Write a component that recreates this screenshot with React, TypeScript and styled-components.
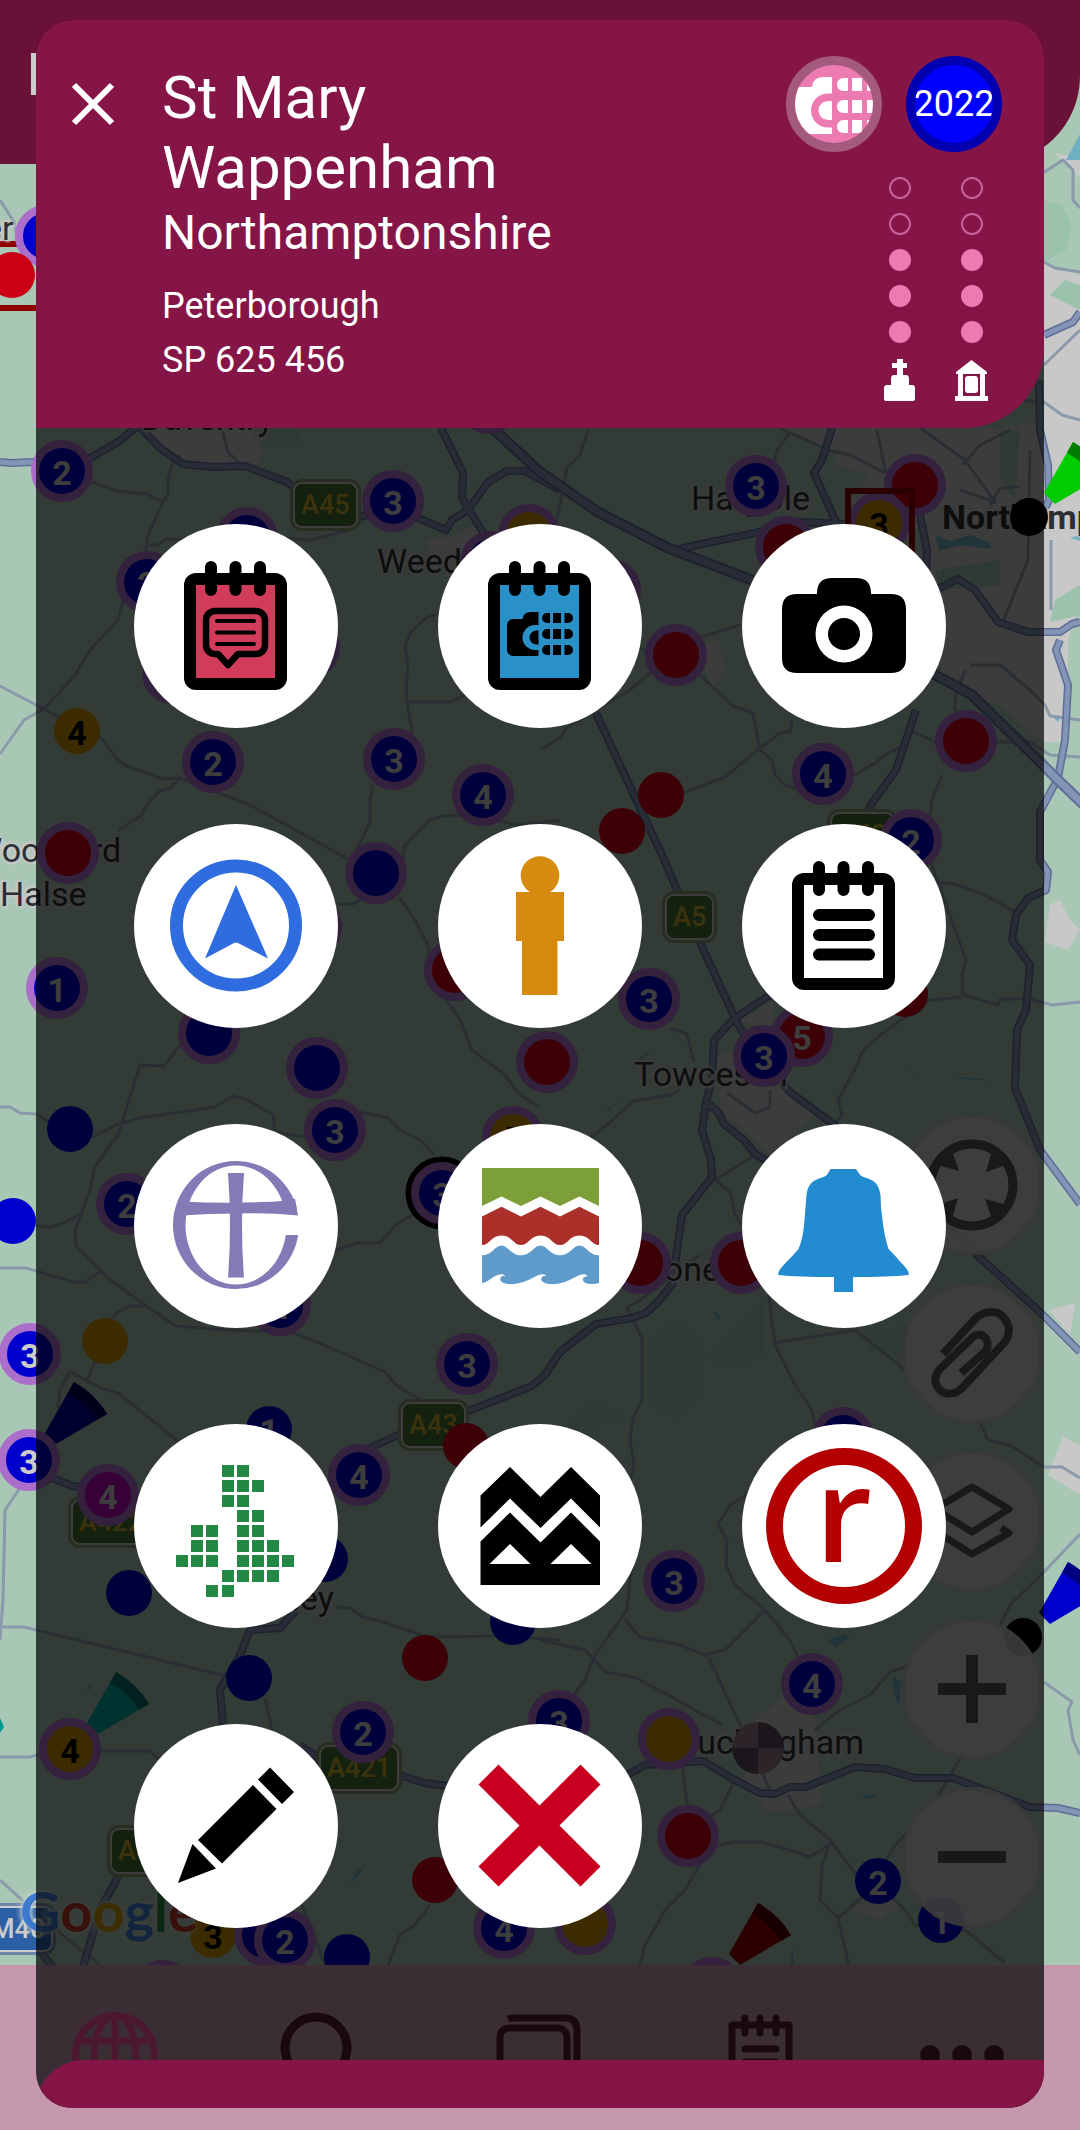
import React from "react";
import styled, { createGlobalStyle } from "styled-components";

const GlobalStyle = createGlobalStyle`
  * { box-sizing: border-box; }
  body { margin: 0; font-family: Roboto, "Noto Sans", sans-serif; background: #c598ad; }
  button { font: inherit; border: 0; padding: 0; background: none; cursor: pointer; color: inherit; }
  svg { display: block; }
`;

/* ---------- page behind the dialog ---------- */

const HEADER_HEIGHT = 164;

const Page = styled.div`
  position: relative;
  min-height: 100vh;
  display: flex;
  flex-direction: column;
  overflow: hidden;
  background: #a9c7b5;
`;

const AppBar = styled.header`
  position: relative;
  z-index: 1;
  height: ${HEADER_HEIGHT}px;
  padding: 40px 26px 0;
  background: #691136;
  border-bottom-right-radius: 88px;
  color: #cccccc;
  font-size: 60px;
  line-height: 70px;
`;

const MapArea = styled.main`
  position: relative;
  flex: 1;
`;

const MapClip = styled.div`
  position: absolute;
  inset: -${HEADER_HEIGHT}px 0 0;
  overflow: hidden;
`;

const MapSvg = styled.svg`
  position: absolute;
  left: 0;
  top: 0;
`;

const PlaceLabel = styled.span<{ $x: number; $y: number; $bold?: boolean }>`
  position: absolute;
  left: ${(p) => p.$x}px;
  top: ${(p) => p.$y - 32}px;
  font-size: 34px;
  line-height: 40px;
  font-weight: ${(p) => (p.$bold ? 700 : 400)};
  color: #2c2f31;
  white-space: nowrap;
  text-shadow: 0 0 4px #c8c8c8, 0 0 4px #c8c8c8, 2px 2px 2px #c8c8c8, -2px -2px 2px #c8c8c8;
`;

const RoadSign = styled.span<{ $x: number; $y: number; $motorway?: boolean }>`
  position: absolute;
  left: ${(p) => p.$x}px;
  top: ${(p) => p.$y}px;
  height: 48px;
  padding: 0 6px;
  border: 3px solid #cccccc;
  outline: 3px solid ${(p) => (p.$motorway ? "#6f86ac" : "#84966f")};
  outline-offset: -1px;
  border-radius: 10px;
  background: ${(p) => (p.$motorway ? "#2b5fa6" : "#41712f")};
  color: ${(p) => (p.$motorway ? "#cccccc" : "#c9a92c")};
  font-size: 27px;
  font-weight: 500;
  line-height: 42px;
`;

const pinFill = {
  blue: "#0000cc",
  red: "#cc0014",
  gold: "#cc8f00",
  magenta: "#b800b8",
};

type PinColor = keyof typeof pinFill;

const Pin = styled.span<{ $x: number; $y: number; $color: PinColor; $ring: boolean }>`
  position: absolute;
  left: ${(p) => p.$x - (p.$ring ? 31 : 23)}px;
  top: ${(p) => p.$y - (p.$ring ? 31 : 23)}px;
  width: ${(p) => (p.$ring ? 62 : 46)}px;
  height: ${(p) => (p.$ring ? 62 : 46)}px;
  border: ${(p) => (p.$ring ? "8px solid #ab6fcb" : "0")};
  border-radius: 50%;
  display: flex;
  align-items: center;
  justify-content: center;
  padding-top: 4px;
  background: ${(p) => pinFill[p.$color]};
  color: ${(p) => (p.$color === "gold" ? "#000000" : "#cccccc")};
  font-size: 34px;
  line-height: 40px;
  font-weight: 700;
`;

const BlackDot = styled.span<{ $x: number; $y: number; $size: number }>`
  position: absolute;
  left: ${(p) => p.$x - p.$size / 2}px;
  top: ${(p) => p.$y - p.$size / 2}px;
  width: ${(p) => p.$size}px;
  height: ${(p) => p.$size}px;
  border-radius: 50%;
  background: #000000;
`;

const CheckerDot = styled(BlackDot)`
  background: conic-gradient(#594a5a 25%, #957889 0 50%, #594a5a 0 75%, #957889 0);
`;

const RedFrame = styled.span<{ $x: number; $y: number }>`
  position: absolute;
  left: ${(p) => p.$x}px;
  top: ${(p) => p.$y}px;
  width: 70px;
  height: 70px;
  border: 6px solid #8f0000;
`;

const GoogleLogo = styled.span`
  position: absolute;
  left: 20px;
  top: 1881px;
  font-family: Lato, "Noto Sans", sans-serif;
  font-size: 56px;
  line-height: 60px;
  font-weight: 700;
  text-shadow: 0 0 6px #c8d4cc, 0 0 6px #c8d4cc;
`;

const LogoLetter = styled.span<{ $color: string }>`
  color: ${(p) => p.$color};
`;

const MapControls = styled.div`
  position: absolute;
  right: 38px;
  bottom: 38px;
  display: flex;
  flex-direction: column;
  gap: 28px;
`;

const MapControl = styled.button`
  width: 140px;
  height: 140px;
  border: 3px solid #b8bcba;
  border-radius: 50%;
  background: rgba(206, 206, 206, 0.88);
  color: #4e5852;
  display: grid;
  place-items: center;
`;

const BottomNav = styled.nav`
  height: 165px;
  padding-top: 40px;
  display: flex;
  background: #c598ad;
`;

const NavButton = styled.button<{ $active?: boolean }>`
  flex: 1;
  height: 100px;
  display: flex;
  justify-content: center;
  color: ${(p) => (p.$active ? "#ff50a0" : "#4d2135")};
`;

/* ---------- dialog ---------- */

const Dialog = styled.section`
  position: absolute;
  z-index: 2;
  inset: 20px 36px 22px;
  display: flex;
  flex-direction: column;
  border-radius: 36px;
  overflow: hidden;
  background: rgba(0, 0, 0, 0.7);
`;

const DialogHeader = styled.header`
  min-height: 408px;
  padding: 36px 42px 20px 24px;
  display: flex;
  align-items: flex-start;
  background: #841546;
  border-bottom-right-radius: 80px;
  color: #ffffff;
`;

const CloseButton = styled.button`
  width: 66px;
  height: 96px;
  margin-right: 36px;
  display: grid;
  place-items: center;
`;

const Heading = styled.div`
  flex: 1;
  padding-top: 7px;
`;

const Title = styled.h1`
  margin: 0;
  font-size: 60px;
  line-height: 70px;
  font-weight: 400;
`;

const County = styled.p`
  margin: 0 0 16px;
  font-size: 48px;
  line-height: 60px;
`;

const Detail = styled.p`
  margin: 0;
  font-size: 36px;
  line-height: 54px;
`;

const Status = styled.div`
  display: flex;
  flex-direction: column;
  align-items: flex-end;
  gap: 25px;
`;

const Badges = styled.div`
  display: flex;
  gap: 24px;
`;

const Badge = styled.span<{ $fill: string; $edge: string }>`
  width: 96px;
  height: 96px;
  border: 9px solid ${(p) => p.$edge};
  border-radius: 50%;
  overflow: hidden;
  display: flex;
  align-items: center;
  justify-content: center;
  background: ${(p) => p.$fill};
  font-size: 36px;
`;

const Ratings = styled.div`
  display: flex;
  gap: 36px;
  padding-right: 12px;
`;

const Rating = styled.div`
  width: 36px;
  display: flex;
  flex-direction: column;
  align-items: center;
  gap: 14px;
`;

const RatingDot = styled.span<{ $on: boolean }>`
  width: 22px;
  height: 22px;
  border-radius: 50%;
  border: ${(p) => (p.$on ? "0" : "2px solid #c4649a")};
  background: ${(p) => (p.$on ? "#eb7bb0" : "transparent")};
`;

const Actions = styled.div`
  flex: 1;
  padding-top: 96px;
  display: grid;
  grid-template-columns: repeat(3, 204px);
  grid-auto-rows: 204px;
  gap: 96px 100px;
  justify-content: center;
`;

const ActionButton = styled.button`
  width: 204px;
  height: 204px;
  border-radius: 50%;
  background: #ffffff;
`;

const DialogFooter = styled.footer`
  height: 48px;
  background: #841546;
  border-top-left-radius: 48px;
`;

/* ---------- map data ---------- */

type PinData = [x: number, y: number, color: PinColor, ring: boolean, label?: string];

const pins: PinData[] = [
  [46, 236, "blue", true],
  [12, 275, "red", false],
  [62, 471, "blue", true, "2"],
  [247, 538, "blue", true],
  [147, 582, "blue", true, "2"],
  [173, 673, "blue", true],
  [309, 648, "blue", true],
  [393, 501, "blue", true, "3"],
  [529, 535, "gold", true],
  [491, 562, "blue", true],
  [489, 403, "blue", true],
  [77, 731, "gold", false, "4"],
  [213, 762, "blue", true, "2"],
  [394, 759, "blue", true, "3"],
  [483, 795, "blue", true, "4"],
  [68, 853, "red", true],
  [756, 486, "blue", true, "3"],
  [915, 485, "red", true],
  [879, 523, "gold", true, "3"],
  [786, 547, "red", true],
  [610, 590, "blue", true],
  [676, 655, "red", true],
  [823, 774, "blue", true, "4"],
  [966, 741, "red", true],
  [661, 795, "red", false],
  [622, 831, "red", false],
  [911, 840, "blue", true, "2"],
  [57, 988, "blue", true, "1"],
  [376, 873, "blue", true],
  [311, 927, "blue", true],
  [209, 1033, "blue", true],
  [317, 1068, "blue", true],
  [335, 1130, "blue", true, "3"],
  [70, 1129, "blue", false],
  [127, 1204, "blue", true, "2"],
  [13, 1221, "blue", false],
  [455, 970, "red", true],
  [513, 1137, "gold", true, "5"],
  [442, 1193, "blue", true, "3"],
  [547, 1062, "red", true],
  [649, 999, "blue", true, "3"],
  [802, 1036, "red", true, "5"],
  [764, 1056, "blue", true, "3"],
  [905, 994, "red", false],
  [640, 1263, "red", true],
  [741, 1263, "red", true],
  [280, 1305, "blue", true, "4"],
  [105, 1341, "gold", false],
  [30, 1354, "blue", true, "3"],
  [29, 1460, "blue", true, "3"],
  [108, 1495, "magenta", true, "4"],
  [269, 1429, "blue", false, "1"],
  [359, 1475, "blue", true, "4"],
  [467, 1364, "blue", true, "3"],
  [466, 1446, "red", false],
  [325, 1559, "blue", false],
  [129, 1593, "blue", false],
  [513, 1622, "blue", false],
  [425, 1658, "red", false],
  [249, 1678, "blue", false],
  [843, 1438, "blue", true],
  [674, 1581, "blue", true, "3"],
  [812, 1684, "blue", true, "4"],
  [70, 1749, "gold", true, "4"],
  [363, 1732, "blue", true, "2"],
  [435, 1880, "red", false],
  [213, 1935, "gold", false, "3"],
  [265, 1935, "blue", true],
  [285, 1940, "blue", true, "2"],
  [347, 1957, "blue", false],
  [163, 1991, "blue", true],
  [504, 1928, "blue", true, "4"],
  [559, 1721, "blue", true, "3"],
  [669, 1739, "gold", true],
  [688, 1836, "red", true],
  [585, 1924, "gold", true],
  [878, 1881, "blue", false, "2"],
  [941, 1920, "blue", false, "1"],
  [712, 1988, "blue", true],
];

const places: { name: string; x: number; y: number; bold?: boolean }[] = [
  { name: "er", x: -16, y: 240 },
  { name: "Daventry", x: 141, y: 430 },
  { name: "Harpole", x: 691, y: 510 },
  { name: "Weedon", x: 377, y: 573 },
  { name: "Northampton", x: 942, y: 529, bold: true },
  { name: "Woodford", x: -28, y: 862 },
  { name: "Halse", x: 0, y: 906 },
  { name: "Towcester", x: 634, y: 1086 },
  { name: "Silverstone", x: 553, y: 1281 },
  { name: "Brackley", x: 206, y: 1610 },
  { name: "Buckingham", x: 676, y: 1754 },
];

const signs: { name: string; x: number; y: number; motorway?: boolean }[] = [
  { name: "A45", x: 292, y: 481 },
  { name: "A43", x: 829, y: 811 },
  { name: "A5", x: 664, y: 893 },
  { name: "A43", x: 400, y: 1401 },
  { name: "A422", x: 70, y: 1498 },
  { name: "A421", x: 318, y: 1744 },
  { name: "A43", x: 109, y: 1827 },
  { name: "M40", x: -18, y: 1905, motorway: true },
];

const mainRoads = [
  "0,462 12,463 33,462 62,471 90,458 118,442 140,424",
  "141,428 160,448 183,464 214,467 245,466 287,482 305,496",
  "360,517 393,505 418,518 446,530 452,520 468,510 488,482 507,471 525,471 560,490",
  "441,428 463,473 462,498 484,534",
  "676,550 697,545 755,533 800,522 850,524",
  "832,428 822,460 814,473 836,522",
  "920,515 927,550 925,600",
  "1039,380 1040,430 1048,465 1049,500 1040,520",
  "1044,335 1073,322 1080,312",
  "925,595 958,579 975,590 998,622 1028,632 1060,632 1072,624 1080,622",
  "1060,640 1056,650 1068,685 1065,740 1058,778 1040,812 1040,860 1048,872 1046,890 1028,898 1016,915 1012,940 1030,965 1026,1010 1017,1030 1015,1088 1040,1150 1080,1204",
  "596,713 613,750 640,808 662,855 690,920 708,960 735,1018 744,1035 790,1092 833,1124 870,1160",
  "916,710 896,770 870,806 866,835",
  "800,980 767,997 735,1018 714,1040 712,1080 706,1102 702,1130 711,1160 712,1177 682,1215 677,1250 673,1283 658,1302 646,1313 632,1318 596,1324 560,1352 545,1375 532,1386 468,1411 400,1434 370,1448",
  "706,1102 718,1112 724,1124 744,1140 755,1154 800,1180",
  "940,1220 978,1256 1040,1312 1080,1352",
  "45,1475 72,1486 100,1490",
  "296,1610 280,1628 250,1630 240,1655 220,1690 223,1725",
  "300,1745 318,1758",
  "400,1775 424,1783 448,1786 500,1790 600,1790 645,1765 703,1761 735,1780 760,1793 775,1794 790,1787 806,1787 855,1767 885,1769 915,1778 953,1778 1030,1807 1058,1808 1080,1813",
  "120,1873 100,1910 82,1970",
  "20,1925 55,1970",
];

const minorRoads = [
  "92,482 117,491 147,494 163,502 168,495 168,477 173,462 180,456",
  "163,502 148,535 145,555 130,575 118,620 90,650 75,675 44,709 24,720 0,754",
  "145,545 158,545 166,539 200,540 245,536 310,540 350,530",
  "222,430 228,452 238,462",
  "0,686 44,709 70,723 97,733 107,745 116,758 124,765 163,779 180,778 250,805 350,860",
  "180,778 170,788 160,791 148,803 141,816 118,830",
  "440,614 427,617 411,632 405,646 408,665 406,688 408,710 412,730 411,745",
  "408,702 450,702 475,690",
  "373,785 370,800 370,822 352,860 376,873",
  "400,875 405,845 430,820 443,816 470,815 520,825 560,820",
  "337,904 353,904 370,895",
  "399,897 415,920 428,945 432,985 450,1005 460,1020 472,1050 505,1075 520,1095 540,1107",
  "0,1107 10,1107 20,1113 36,1114 60,1129 93,1137 115,1125 140,1118 215,1107 233,1096 248,1100 273,1115 275,1132 310,1138 360,1112 388,1118 400,1130 420,1140 435,1155",
  "180,1045 164,1066 140,1065 118,1135 95,1166 90,1190 75,1230 76,1246 110,1280 145,1305 176,1326 225,1330 290,1332 322,1344 385,1372 396,1385 420,1400",
  "36,1226 50,1227 64,1223 82,1213",
  "0,1268 26,1268 74,1282 85,1282 100,1272",
  "105,1341 87,1380",
  "143,1306 130,1306 116,1313 105,1335",
  "58,1408 60,1390 70,1372 103,1389 118,1393 180,1443",
  "22,1485 5,1510 3,1600 0,1640",
  "0,1627 24,1627 230,1677",
  "337,1607 350,1608 362,1617 380,1621 428,1637 500,1636 560,1640",
  "0,1757 30,1757 50,1751 150,1751 160,1760",
  "330,1252 357,1243 380,1243 395,1225 420,1210",
  "540,645 600,630 650,653 740,625",
  "700,675 733,706 753,713 760,750 772,760 775,775 785,785 800,790",
  "760,748 780,733 790,732 792,720",
  "683,793 725,777 760,748",
  "540,750 560,738 566,728 630,690 690,640",
  "588,430 580,455 567,468 555,530",
  "780,428 828,450 850,455 885,473",
  "790,432 777,450 772,470",
  "877,430 885,470 915,500",
  "920,428 965,460 995,502 960,490",
  "1010,430 980,445 963,465",
  "990,505 1000,488 1020,487",
  "1030,450 1028,560 1002,624",
  "1051,540 1051,610",
  "966,670 956,690 954,720",
  "970,665 1000,665 1030,690 1045,705 1050,716 1080,720",
  "910,730 935,742 1030,742 1050,755 1080,757",
  "942,775 932,800 930,815 917,830",
  "855,775 875,763 890,752 900,748",
  "930,860 966,960 962,975 963,995 998,1005 1000,999 1030,999 1052,1005 1080,1002",
  "963,997 930,1000 880,1035 862,1052 857,1065 838,1100 842,1115 834,1125",
  "940,883 955,884 985,895 1015,912",
  "670,1028 687,1034 694,1062",
  "590,1138 607,1125 633,1101 670,1095 680,1090",
  "727,1093 755,1113 770,1107 770,1090",
  "755,1155 715,1180 730,1192 735,1215 760,1250 768,1290 775,1345 795,1385 812,1410 815,1425",
  "775,1343 855,1330 905,1370 980,1422 988,1440 1010,1445 1044,1467 1062,1467 1080,1478",
  "700,1255 640,1300 627,1308 642,1338 642,1400 633,1418 630,1440 634,1465 620,1520 632,1560 627,1610 595,1655",
  "755,1490 730,1505 718,1525 727,1540 726,1565 735,1585 765,1610 790,1640 800,1662 830,1665",
  "765,1610 725,1650 705,1655 680,1645 640,1637 625,1620",
  "540,1640 585,1650 605,1672 637,1678 722,1725",
  "709,1658 740,1725 770,1790",
  "595,1655 585,1680 570,1700",
  "682,1765 688,1810",
  "735,1780 720,1810 705,1820 690,1836",
  "715,1846 735,1842 760,1842 790,1850 810,1857 830,1844 822,1865 820,1900 838,1918 870,1890",
  "838,1918 850,1970",
  "788,1795 800,1815 830,1840 860,1880",
  "700,1865 685,1890 665,1910 645,1945 639,1970",
  "890,1895 905,1910 915,1925 965,1930 1005,1963",
  "880,1870 895,1845 930,1810 965,1750 970,1720",
  "815,1730 840,1710 870,1695 890,1672 925,1660 980,1632",
  "1080,1534 1044,1572 1010,1605 995,1635",
  "1044,1682 1072,1702 1068,1710 1073,1740 1080,1755",
  "430,1905 415,1925 400,1935 388,1965",
  "0,1880 22,1900 50,1925 100,1965",
  "302,1905 325,1965",
  "265,1698 272,1730",
  "1040,175 1063,160 1073,170 1073,200 1080,208",
  "1044,262 1055,268 1080,272",
  "1044,365 1080,330",
  "1080,420 1062,415 1044,402 1020,400",
  "0,200 14,222 18,240",
];

const urbanAreas = [
  "141,428 250,428 264,452 257,464 214,467 183,462",
  "425,540 460,535 480,520 490,560 450,580",
  "780,426 836,452 834,465 870,475 850,500 852,524 925,530 930,600 945,690 1000,705 1044,742 1068,742 1068,640 1080,600 1080,380 1044,420 1000,428",
  "1054,153 1080,158 1080,178 1072,170",
  "1044,262 1080,275 1080,440 1044,430",
  "700,645 718,640 725,670 710,690",
  "718,1055 745,1050 790,1090 815,1115 770,1155 745,1130 720,1110",
  "740,1020 775,1000 770,1030",
  "745,1730 790,1690 815,1720 822,1805 768,1812 745,1780",
  "1050,905 1060,900 1070,920 1080,930 1068,950 1045,942",
  "1049,1310 1075,1303 1070,1335",
  "1048,1475 1063,1437 1080,1445 1080,1495",
  "850,1910 880,1895 900,1905 880,1920",
];

const woodland = [
  "250,420 300,420 300,445 275,448",
  "650,1340 680,1318 705,1345 702,1390 680,1420 665,1415 645,1395",
  "707,1360 730,1330 765,1300 765,1355 745,1367",
  "565,1430 595,1400 630,1420",
  "1000,430 1020,430 1015,500 1000,480",
  "1044,200 1062,205 1072,225 1066,250 1044,262",
  "1050,295 1065,280 1080,285 1080,310",
  "1055,600 1080,585 1080,615 1050,622",
  "935,570 1000,560 1000,585 940,590",
  "870,1330 910,1325 905,1355 870,1350",
];

const motorway = "489,425 540,472 598,512 668,548 752,580 850,620 930,672 972,695 1034,756 1058,780 1085,806";

const wedges = [
  { x: 45, y: 1433, color: "#00009c", shade: "#00005c" },
  { x: 87, y: 1723, color: "#00a79e", shade: "#006e68" },
  { x: 729, y: 1954, color: "#960000", shade: "#550000" },
  { x: 1039, y: 1613, color: "#0000cc", shade: "#000080" },
  { x: 1044, y: 493, color: "#00cc00", shade: "#007d00" },
];

function MapDrawing() {
  return (
    <MapSvg width="1080" height="1970" viewBox="0 0 1080 1970" aria-hidden="true">
      {urbanAreas.map((p) => <polygon key={p} points={p} fill="#c8c8c8" />)}
      {woodland.map((p) => <polygon key={p} points={p} fill="#9bc2ac" />)}
      <g fill="#6fb0c4">
        <path d="M935 535l15 6 20-6 20 8 1 6-30-4-22 6z" />
        <path d="M955 550l-12 20-4 18 8-24z" />
        <path d="M638 1058l16-9-14 12zM606 1110l14-10-12 12zM912 1073l-4-6 10 10zM955 1079l45 2-40-4z" />
        <path d="M828 1640l16-6 6 2-14 12zM893 1676l8 6-2 24-6-16zM860 1795h18l-8 4z" />
        <path d="M712 1310l9 6-2 6zM350 1885l5-12 15-12zM86 1690l5-8-1 8zM791 1965l1-20 2 20z" />
        <path d="M1066 160l14-26v26zM1070 538l10-3v6zM1050 714l10 4-2 4z" />
      </g>
      <g fill="none" stroke="#8b9aab" strokeWidth="3" strokeLinejoin="round">
        {minorRoads.map((p) => <polyline key={p} points={p} />)}
      </g>
      <g fill="none" stroke="#5d6e96" strokeWidth="8" strokeLinejoin="round">
        {mainRoads.map((p) => <polyline key={p} points={p} />)}
      </g>
      <g fill="none" stroke="#8394b6" strokeWidth="5" strokeLinejoin="round">
        {mainRoads.map((p) => <polyline key={p} points={p} />)}
      </g>
      <polyline points={motorway} fill="none" stroke="#5d6e96" strokeWidth="11" />
      <polyline points={motorway} fill="none" stroke="#8394b6" strokeWidth="7" />
      {wedges.map(({ x, y, color, shade }) => (
        <g key={color} transform={`translate(${x} ${y})`}>
          <path d="M0 0L11 11 62 -19Q50 -39 29 -51Z" fill={color} />
          <path d="M29 -51Q50 -39 62 -19L52 -13Q42 -30 23 -40Z" fill={shade} />
        </g>
      ))}
      <path d="M0 1718l4 9-4 6z" fill="#009a90" />
      <circle cx="442" cy="1193" r="33" fill="none" stroke="#000" strokeWidth="7" />
    </MapSvg>
  );
}

/* ---------- icons ---------- */

function ActionIcon({ children }: { children: React.ReactNode }) {
  return (
    <svg width="204" height="204" viewBox="0 0 204 204" aria-hidden="true">
      {children}
    </svg>
  );
}

function Notepad({ fill, children }: { fill: string; children?: React.ReactNode }) {
  return (
    <ActionIcon>
      <rect x="50" y="49" width="103" height="117" rx="12" />
      <rect x="62" y="61" width="79" height="93" fill={fill} />
      <path d="M77 43v23M101.500 43v23M126 43v23" stroke="#000" strokeWidth="12" strokeLinecap="round" />
      {children}
    </ActionIcon>
  );
}

const gridRows = [[3, 4], [3, 4, 5], [3, 4], [4, 5], [1, 2, 4, 5], [1, 2, 4, 5, 6], [0, 1, 2, 4, 5, 6, 7], [3, 4, 5, 6], [2, 3]];

const actions: { label: string; icon: React.ReactNode }[] = [
  {
    label: "Comments",
    icon: (
      <Notepad fill="#d03c5a">
        <path
          d="M81 87h41a9 9 0 0 1 9 9v25a9 9 0 0 1-9 9h-18l-10 11-10-11h-3a9 9 0 0 1-9-9v-25a9 9 0 0 1 9-9z"
          fill="none"
          stroke="#000"
          strokeWidth="6.5"
          strokeLinejoin="round"
        />
        <path d="M83 97h37M83 108.500h37M83 120h37" stroke="#000" strokeWidth="4" strokeLinecap="round" />
      </Notepad>
    ),
  },
  {
    label: "Visit log",
    icon: (
      <Notepad fill="#2a91c8">
        <path d="M100.500 88v44H75a6 6 0 0 1-6-6v-25a6 6 0 0 1 6-6h9.500q1-7 8-7z" />
        <path d="M101 101h-4a12.500 12.500 0 0 0 0 25h4z" fill="#2a91c8" />
        <path d="M100.500 106.500h-2a7 7 0 0 0 0 14h2z" />
        {[89, 105, 121].map((y) => (
          <g key={y} transform={`translate(104 ${y})`}>
            <path d="M8 0v10H5a5 5 0 0 1 0-10zM11 0h8v10h-8zM22.500 0H26a5 5 0 0 1 0 10h-3.500z" />
          </g>
        ))}
      </Notepad>
    ),
  },
  {
    label: "Photos",
    icon: (
      <ActionIcon>
        <path d="M75 70V69q0-15 15-15h24q15 0 15 15v1h20q15 0 15 15v49q0 15-15 15H55q-15 0-15-15V85q0-15 15-15z" />
        <circle cx="102" cy="110" r="28.500" fill="#fff" />
        <circle cx="102" cy="110" r="16" />
      </ActionIcon>
    ),
  },
  {
    label: "Navigate",
    icon: (
      <ActionIcon>
        <circle cx="102" cy="101.500" r="59.500" fill="none" stroke="#2f6cdf" strokeWidth="13" />
        <path d="M102 61l32 73.500-30-15.500q-2-1-4 0l-29 15.500z" fill="#2f6cdf" />
      </ActionIcon>
    ),
  },
  {
    label: "Street view",
    icon: (
      <ActionIcon>
        <circle cx="102" cy="51.500" r="19.300" fill="#d68b0e" />
        <path d="M78 68h48v49h-6.500v54H84v-54h-6z" fill="#d68b0e" />
      </ActionIcon>
    ),
  },
  {
    label: "Notes",
    icon: (
      <Notepad fill="#fff">
        <path d="M77 91h50M77 111h50M77 130.500h50" stroke="#000" strokeWidth="12" strokeLinecap="round" />
      </Notepad>
    ),
  },
  {
    label: "A Church Near You",
    icon: (
      <ActionIcon>
        <g fill="#8579b6">
          <path
            fillRule="evenodd"
            d="M39 101a63 64 0 0 1 126 0a63 64 0 0 1-126 0zM51.500 101a50.500 59.500 0 0 1 101 0a50.500 59.500 0 0 1-101 0z"
          />
          <rect x="138" y="84" width="30" height="27" fill="#fff" />
          <path d="M48 77.500q54 3 107 -1l6 -2 3 17q-31-3-62-2-27 0-54 2z" />
          <path d="M94 49h16q-4 52 0 104.500H94q4-52 0-104.500z" />
        </g>
      </ActionIcon>
    ),
  },
  {
    label: "Geology",
    icon: (
      <ActionIcon>
        <path d="M44 44h117v38l-19.500-9.500L122 82l-19.500-9.500L83 82l-19.500-9.500L44 82z" fill="#7c9f3a" />
        <path
          d="M44 92.500l19.500-9.800L83 92.500l19.500-9.800L122 92.500l19.500-9.800L161 92.500V121c-8 0-9-9.600-19.500-9.600S130 121 122 121s-9-9.600-19.500-9.600S91 121 83 121s-9-9.600-19.500-9.600S52 121 44 121z"
          fill="#aa3029"
        />
        <path
          d="M44 131.300c10 0 13-9.800 19.500-9.800s9.500 9.800 19.500 9.800 13-9.800 19.500-9.800 9.500 9.800 19.500 9.800 13-9.800 19.500-9.800 9.500 9.800 19.500 9.800V159c-6 1.500-15 2-16-3-.5-3 2-4 4.500-3.500-2-4-8-1.500-12 .5-8 4-15 8-27 7-8-1-9-6-5-8 1-.5 2 0 3 .5-2-4-8-1.500-12 .5-8 4-16 8-27 7-8-1-9-6-5-8 1-.5 2 0 3 .5-2-4-8-1.500-12 .5-4 2.500-6 5-11.500 6z"
          fill="#5e9bcb"
        />
      </ActionIcon>
    ),
  },
  {
    label: "Bells",
    icon: (
      <ActionIcon>
        <path
          d="M88.500 45H114l3.500 5q1 2 4 3c8 3 15 4 17 18q0 12 2 25 2 17 6 29 8 8 12 13 10 10 8 13-20 2-55.500 2v15H92v-15q-36 0-55.500-2-2-3 8-13 5-5 12-13 5-12 6-29 1-13 2-25c2-14 9-15 17-18q3-1 4-3z"
          fill="#238bcf"
        />
      </ActionIcon>
    ),
  },
  {
    label: "Geograph",
    icon: (
      <ActionIcon>
        <g fill="#238843">
          {gridRows.map((cols, r) =>
            cols.map((c) => <rect key={`${r}-${c}`} x={42 + Math.round(c * 15.2)} y={41 + r * 15} width="12" height="12" />),
          )}
        </g>
      </ActionIcon>
    ),
  },
  {
    label: "Landscape",
    icon: (
      <ActionIcon>
        <path d="M42.500 71.500L72 43l30.500 30L133 43l29 28.500v32L133 74.500 102.500 104 72 74.500l-29.500 29z" />
        <path
          fillRule="evenodd"
          d="M42.500 117.500L72 88.500l30.500 30L133 88.500l29 29V161H42.500zM51.500 140h41L72 120zM112.500 140h41L133 120z"
        />
      </ActionIcon>
    ),
  },
  {
    label: "National register",
    icon: (
      <ActionIcon>
        <circle cx="102" cy="102" r="69.500" fill="none" stroke="#b30000" strokeWidth="17" />
        <text x="73" y="138" fontFamily="'Open Sans', 'Noto Sans', sans-serif" fontSize="132" fontWeight="600" fill="#b30000">
          r
        </text>
      </ActionIcon>
    ),
  },
  {
    label: "Edit",
    icon: (
      <ActionIcon>
        <path d="M44 159l14.500-39L82 144.500zM64 116l55-55 23.500 24L88 139.500zM124 55.500l12-12L160 68l-12 12z" />
      </ActionIcon>
    ),
  },
  {
    label: "Remove",
    icon: (
      <ActionIcon>
        <path
          d="M40.500 60.500l20-20 41 41 41-41 20 20-41 41 41 41-20 20-41-41-41 41-20-20 41-41z"
          fill="#c8001f"
        />
      </ActionIcon>
    ),
  },
];

const mapTools: { label: string; icon: React.ReactNode }[] = [
  {
    label: "Locate",
    icon: (
      <>
        <circle r="41" fill="none" stroke="currentColor" strokeWidth="9" />
        {[0, 90, 180, 270].map((a) => (
          <path key={a} d="M-13 -14L-19 -31-26 -36-36 -26-31 -19z" fill="currentColor" transform={`rotate(${a})`} />
        ))}
      </>
    ),
  },
  {
    label: "Attachments",
    icon: (
      <path
        d="M-29 1L3 -34C12 -43 26 -43 32 -35 40 -26 37 -15 31 -9L-9 34C-17 43 -28 42 -33 36-38 30 -38 22 -32 16L1 -16C9 -23 20 -13 14 -2L-11 20"
        fill="none"
        stroke="currentColor"
        strokeWidth="8"
      />
    ),
  },
  {
    label: "Layers",
    icon: (
      <path
        d="M0 -34L37 -12 0 11-37 -12zM-37 10L0 33 37 12 29 7"
        fill="none"
        stroke="currentColor"
        strokeWidth="7"
        strokeLinejoin="round"
      />
    ),
  },
  { label: "Zoom in", icon: <path d="M-34 -6h28v-28h12v28h28v12h-28v28h-12v-28h-28z" fill="currentColor" /> },
  { label: "Zoom out", icon: <path d="M-34 -6h68v12h-68z" fill="currentColor" /> },
];

const navItems: { label: string; icon: React.ReactNode }[] = [
  {
    label: "Map",
    icon: (
      <g fill="none" stroke="currentColor" strokeWidth="7">
        <circle cx="57" cy="50" r="39.500" />
        <ellipse cx="57" cy="50" rx="21" ry="39.500" />
        <path d="M57 10v80M20 36h74M20 64h74" />
      </g>
    ),
  },
  {
    label: "Search",
    icon: (
      <g fill="none" stroke="currentColor" strokeWidth="9">
        <circle cx="42" cy="43" r="31" />
        <path d="M64 65l26 26" />
      </g>
    ),
  },
  {
    label: "Lists",
    icon: (
      <g fill="none" stroke="currentColor" strokeWidth="7">
        <path d="M18 14q2-1 6-1h51q12 0 12 12v47" />
        <rect x="10" y="23" width="67" height="62" rx="9" />
      </g>
    ),
  },
  {
    label: "Notes",
    icon: (
      <g fill="none" stroke="currentColor" strokeWidth="7" strokeLinejoin="round">
        <rect x="26" y="20" width="57" height="70" />
        <path d="M39 13v15M54 13v15M70 13v15M39 44h31M39 57h31M39 70h31" strokeLinecap="round" />
      </g>
    ),
  },
  {
    label: "More",
    icon: (
      <g fill="currentColor">
        <circle cx="8" cy="50" r="10" />
        <circle cx="40" cy="50" r="10" />
        <circle cx="72" cy="50" r="10" />
      </g>
    ),
  },
];

const ratings = [
  {
    label: "Church rating 3 of 5",
    icon: (
      <path d="M15 2h6v4h4v5h-4v7h3q3 0 3 4v6h3q3 0 3 3v11q0 2-2 2H4q-2 0-2-2V31q0-3 3-3h4v-6q0-4 3-4h3v-7h-5V6h5z" />
    ),
  },
  {
    label: "Furnishings rating 3 of 5",
    icon: (
      <path
        fillRule="evenodd"
        d="M17.500 3l15.500 12v2h-2v22h3v5H1v-5h3V17H2v-2zM9 17v22h17V17zM14 19h7q3 0 3 3v11q0 3-3 3h-7q-3 0-3-3V22q0-3 3-3z"
      />
    ),
  },
];

export default function App() {
  return (
    <>
      <GlobalStyle />
      <Page>
        <AppBar>Map</AppBar>
        <MapArea>
          <MapClip>
            <MapDrawing />
            <RedFrame $x={-28} $y={241} />
            {places.map((p) => (
              <PlaceLabel key={p.name} $x={p.x} $y={p.y} $bold={p.bold}>
                {p.name}
              </PlaceLabel>
            ))}
            {signs.map((s) => (
              <RoadSign key={`${s.x}-${s.y}`} $x={s.x} $y={s.y} $motorway={s.motorway}>
                {s.name}
              </RoadSign>
            ))}
            {pins.map(([x, y, color, ring, label]) => (
              <Pin key={`${x}-${y}`} $x={x} $y={y} $color={color} $ring={ring}>
                {label}
              </Pin>
            ))}
            <RedFrame $x={845} $y={488} />
            <BlackDot $x={1029} $y={517} $size={38} />
            <BlackDot $x={1023} $y={1637} $size={38} />
            <CheckerDot $x={758} $y={1748} $size={52} />
            <GoogleLogo>
              <LogoLetter $color="#3f78cf">G</LogoLetter>
              <LogoLetter $color="#c0392b">o</LogoLetter>
              <LogoLetter $color="#c9960a">o</LogoLetter>
              <LogoLetter $color="#3f78cf">g</LogoLetter>
              <LogoLetter $color="#2a8743">l</LogoLetter>
              <LogoLetter $color="#c0392b">e</LogoLetter>
            </GoogleLogo>
          </MapClip>
          <MapControls>
            {mapTools.map((t) => (
              <MapControl key={t.label} aria-label={t.label}>
                <svg width="100" height="100" viewBox="-50 -50 100 100" aria-hidden="true">
                  {t.icon}
                </svg>
              </MapControl>
            ))}
          </MapControls>
        </MapArea>
        <BottomNav>
          {navItems.map((item, i) => (
            <NavButton key={item.label} aria-label={item.label} $active={i === 0}>
              <svg width="100" height="100" viewBox="0 0 100 100" overflow="visible" aria-hidden="true">
                {item.icon}
              </svg>
            </NavButton>
          ))}
        </BottomNav>

        <Dialog role="dialog" aria-label="St Mary Wappenham">
          <DialogHeader>
            <CloseButton aria-label="Close">
              <svg width="44" height="44" viewBox="0 0 44 44" aria-hidden="true">
                <path d="M3 3l38 38M41 3L3 41" stroke="#fff" strokeWidth="6" />
              </svg>
            </CloseButton>
            <Heading>
              <Title>
                St Mary
                <br />
                Wappenham
              </Title>
              <County>Northamptonshire</County>
              <Detail>Peterborough</Detail>
              <Detail>SP 625 456</Detail>
            </Heading>
            <Status>
              <Badges>
                <Badge $fill="#eb7bb0" $edge="#a35a7d">
                  <svg width="78" height="78" viewBox="0 0 78 78" role="img" aria-label="Photographed">
                    <g fill="#fff">
                      <path d="M0 22h17q1-10 11-10h9v57H0z" />
                      <path d="M37 28.500h-4a17 17 0 0 0 0 34h4z" fill="#eb7bb0" />
                      <path d="M37 36h-4a9.500 9.500 0 0 0 0 19h4z" />
                      {[13, 35, 55].map((y) => (
                        <g key={y} transform={`translate(42 ${y})`}>
                          <path d="M11 0v13H6q-6-1-6-6.500T6 0zM15 0h10v13H15zM30 0h10v13H30z" />
                        </g>
                      ))}
                    </g>
                  </svg>
                </Badge>
                <Badge $fill="#0000ff" $edge="#0000b0">
                  2022
                </Badge>
              </Badges>
              <Ratings>
                {ratings.map((r) => (
                  <Rating key={r.label} role="img" aria-label={r.label}>
                    {[false, false, true, true, true].map((on, i) => (
                      <RatingDot key={i} $on={on} />
                    ))}
                    <svg width="36" height="44" viewBox="0 0 36 44" fill="#fff" aria-hidden="true">
                      {r.icon}
                    </svg>
                  </Rating>
                ))}
              </Ratings>
            </Status>
          </DialogHeader>
          <Actions>
            {actions.map((a) => (
              <ActionButton key={a.label} aria-label={a.label}>
                {a.icon}
              </ActionButton>
            ))}
          </Actions>
          <DialogFooter />
        </Dialog>
      </Page>
    </>
  );
}
